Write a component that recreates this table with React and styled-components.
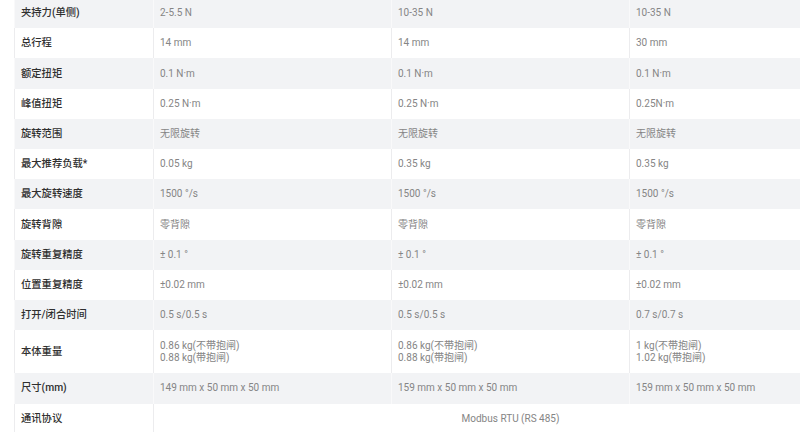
import React from "react";
import styled, { createGlobalStyle } from "styled-components";

const Global = createGlobalStyle`
  html, body { margin: 0; padding: 0; background: #fff; overflow: hidden; }
  body { font-family: Roboto, "Noto Sans CJK SC", sans-serif; }
`;

const Page = styled.div`
  width: 800px;
  height: 432px;
  overflow: hidden;
  padding-left: 14px;
  box-sizing: border-box;
`;

const Table = styled.div`
  width: 853px;
  margin-top: -1.9px;
  display: flex;
  flex-direction: column;
`;

const Row = styled.div`
  display: grid;
  grid-template-columns: 139px 238px 238px 238px;
  background: ${(p) => (p.$shade ? "#f2f3f5" : "#ffffff")};
  --line: ${(p) => (p.$shade ? "#f9f9fa" : "#ececee")};
`;

const Label = styled.div`
  display: flex;
  align-items: center;
  padding: 9.1px 6px;
  border-left: 1px solid var(--line);
  font-size: 10.3px;
  line-height: 12px;
  font-weight: 500;
  color: #2f2f2f;
`;

const Value = styled.div`
  display: flex;
  flex-direction: column;
  justify-content: center;
  padding: 9.1px 6px;
  border-left: 1px solid var(--line);
  font-size: 10px;
  line-height: 12px;
  color: #858585;
  grid-column: span ${(p) => p.$span || 1};
  align-items: ${(p) => (p.$center ? "center" : "flex-start")};
  white-space: nowrap;
`;

const Tall = styled(Value)`
  padding-top: 9.6px;
  padding-bottom: 9.6px;
`;

const rows = [
  ["夹持力(单侧)", ["2-5.5 N", "10-35 N", "10-35 N"]],
  ["总行程", ["14 mm", "14 mm", "30 mm"]],
  ["额定扭矩", ["0.1 N·m", "0.1 N·m", "0.1 N·m"]],
  ["峰值扭矩", ["0.25 N·m", "0.25 N·m", "0.25N·m"]],
  ["旋转范围", ["无限旋转", "无限旋转", "无限旋转"]],
  ["最大推荐负载*", ["0.05 kg", "0.35 kg", "0.35 kg"]],
  ["最大旋转速度", ["1500 °/s", "1500 °/s", "1500 °/s"]],
  ["旋转背隙", ["零背隙", "零背隙", "零背隙"]],
  ["旋转重复精度", ["± 0.1 °", "± 0.1 °", "± 0.1 °"]],
  ["位置重复精度", ["±0.02 mm", "±0.02 mm", "±0.02 mm"]],
  ["打开/闭合时间", ["0.5 s/0.5 s", "0.5 s/0.5 s", "0.7 s/0.7 s"]],
];

const weights = [
  ["0.86 kg(不带抱闸)", "0.88 kg(带抱闸)"],
  ["0.86 kg(不带抱闸)", "0.88 kg(带抱闸)"],
  ["1 kg(不带抱闸)", "1.02 kg(带抱闸)"],
];

export default function App() {
  return (
    <Page>
      <Global />
      <Table>
        {rows.map(([label, vals], i) => (
          <Row key={label} $shade={i % 2 === 0}>
            <Label>{label}</Label>
            {vals.map((v, j) => (
              <Value key={j}>{v}</Value>
            ))}
          </Row>
        ))}
        <Row $shade={false}>
          <Label>本体重量</Label>
          {weights.map((w, j) => (
            <Tall key={j}>
              <span>{w[0]}</span>
              <span>{w[1]}</span>
            </Tall>
          ))}
        </Row>
        <Row $shade>
          <Label>尺寸(mm)</Label>
          <Value>149 mm x 50 mm x 50 mm</Value>
          <Value>159 mm x 50 mm x 50 mm</Value>
          <Value>159 mm x 50 mm x 50 mm</Value>
        </Row>
        <Row $shade={false}>
          <Label>通讯协议</Label>
          <Value $span={3} $center>
            Modbus RTU (RS 485)
          </Value>
        </Row>
      </Table>
    </Page>
  );
}
